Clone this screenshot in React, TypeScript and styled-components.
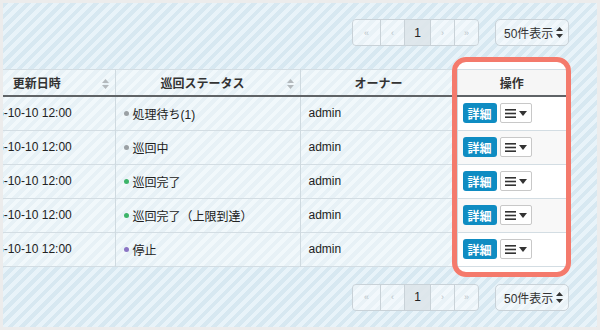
import React from "react";
import styled, { createGlobalStyle } from "styled-components";

const GlobalStyle = createGlobalStyle`
  html, body {
    margin: 0;
    padding: 0;
    height: 330px;
    background: #ececec;
  }
  body {
    font-family: "Liberation Sans", "Noto Sans CJK JP", sans-serif;
    font-size: 12px;
    color: #333333;
  }
`;

const Frame = styled.div`
  position: relative;
  width: 594px;
  height: 324px;
  margin: 3px;
  overflow: hidden;
  background: repeating-linear-gradient(
    135deg,
    #d7e8f1 0px,
    #d7e8f1 4px,
    #e8f3f9 4px,
    #e8f3f9 8px
  );
`;

const Toolbar = styled.div<{ $top?: boolean }>`
  display: flex;
  justify-content: flex-end;
  align-items: center;
  gap: 16px;
  height: 27px;
  padding-right: 28px;
  margin-top: ${(p) => (p.$top ? "16px" : "17px")};
`;

const Pager = styled.ul`
  display: flex;
  margin: 0;
  padding: 0;
  list-style: none;
  border: 1px solid #c9d2d8;
  border-radius: 4px;
  overflow: hidden;
`;

const PageItem = styled.li<{ $active?: boolean; $w: number }>`
  display: flex;
  align-items: center;
  justify-content: center;
  box-sizing: border-box;
  width: ${(p) => p.$w}px;
  height: 25px;
  border-left: 1px solid #c9d2d8;
  background: ${(p) =>
    p.$active ? "rgba(222, 230, 234, 0.9)" : "rgba(255, 255, 255, 0.45)"};
  color: ${(p) => (p.$active ? "#222" : "#b8c2c8")};
  font-size: ${(p) => (p.$active ? "12px" : "9px")};

  &:first-child {
    border-left: none;
  }
`;

const PerPage = styled.div`
  display: flex;
  align-items: center;
  justify-content: space-between;
  box-sizing: border-box;
  width: 74px;
  height: 27px;
  padding: 0 5px 0 8px;
  border: 1px solid #c9d2d8;
  border-radius: 5px;
  background: rgba(255, 255, 255, 0.45);
  color: #333;
  font-size: 12px;
`;

const Grid = styled.table`
  position: relative;
  z-index: 1;
  table-layout: fixed;
  width: 597px;
  margin: 23px 0 0 -34px;
  border-collapse: collapse;
  border-top: 1px solid #d3dde3;
  border-bottom: 1px solid #d3dde3;
`;

const Head = styled.th<{ $op?: boolean; $sort?: boolean }>`
  position: relative;
  height: 25px;
  padding: 0 ${(p) => (p.$sort ? "18px" : "8px")} 0 8px;
  text-align: center;
  font-weight: bold;
  font-size: 12px;
  color: #333;
  background: ${(p) => (p.$op ? "#f6f6f6" : "rgba(255, 255, 255, 0.4)")};
  border-left: 1px solid #cfdae0;
  border-bottom: 2px solid #5f6366;

  &:first-child {
    border-left: none;
  }
`;

const SortMark = styled.svg`
  position: absolute;
  right: 6px;
  top: 9px;
`;

const Row = styled.tr`
  height: 34px;
  border-bottom: 1px solid #d3dde3;
`;

const Cell = styled.td<{ $op?: boolean; $even?: boolean }>`
  padding: 0 ${(p) => (p.$op ? "5px" : "8px")};
  vertical-align: middle;
  font-size: 12px;
  color: #222;
  white-space: nowrap;
  overflow: hidden;
  border-left: 1px solid #cfdae0;
  background: ${(p) =>
    p.$op ? (p.$even ? "#f8f8f8" : "#ffffff") : "rgba(255, 255, 255, 0.4)"};

  &:first-child {
    border-left: none;
  }
`;

const Status = styled.span`
  display: inline-flex;
  align-items: center;
  gap: 4px;
`;

const Dot = styled.i<{ $color: string }>`
  display: inline-block;
  width: 5px;
  height: 5px;
  border-radius: 50%;
  background: ${(p) => p.$color};
`;

const Actions = styled.div`
  display: flex;
  align-items: center;
  gap: 3px;
`;

const DetailButton = styled.button`
  width: 34px;
  height: 20px;
  padding: 0;
  border: none;
  border-radius: 3px;
  background: #0f8cc2;
  color: #ffffff;
  font-family: inherit;
  font-size: 12px;
  font-weight: bold;
`;

const MenuButton = styled.button`
  display: flex;
  align-items: center;
  justify-content: center;
  gap: 3px;
  width: 32px;
  height: 20px;
  padding: 0;
  border: 1px solid #c8c8c8;
  border-radius: 2px;
  background: #ffffff;
`;

const Spotlight = styled.div`
  position: absolute;
  z-index: 0;
  left: 449px;
  top: 54px;
  width: 119px;
  height: 220px;
  border-radius: 14px;
  background: #ffffff;
`;

const Callout = styled.div`
  position: absolute;
  z-index: 2;
  left: 449px;
  top: 54px;
  width: 119px;
  height: 220px;
  box-sizing: border-box;
  border: 5px solid #f47a6c;
  border-radius: 14px;
  pointer-events: none;
`;

const SortIcon = () => (
  <SortMark width="7" height="10" viewBox="0 0 7 10">
    <path d="M3.5 0 L7 4 L0 4 Z" fill="#b3b9bd" />
    <path d="M3.5 10 L7 6 L0 6 Z" fill="#b3b9bd" />
  </SortMark>
);

const SelectArrows = () => (
  <svg width="7" height="11" viewBox="0 0 7 11">
    <path d="M3.5 0 L7 4 L0 4 Z" fill="#333" />
    <path d="M3.5 11 L7 7 L0 7 Z" fill="#333" />
  </svg>
);

const MenuIcon = () => (
  <>
    <svg width="11" height="9" viewBox="0 0 11 9">
      <rect x="0" y="0" width="11" height="1.6" fill="#333" />
      <rect x="0" y="3.7" width="11" height="1.6" fill="#333" />
      <rect x="0" y="7.4" width="11" height="1.6" fill="#333" />
    </svg>
    <svg width="8" height="5" viewBox="0 0 8 5">
      <path d="M0 0 L8 0 L4 5 Z" fill="#333" />
    </svg>
  </>
);

// pager + "per page" select, used above and below the table
const Pagination = ({ top }: { top?: boolean }) => (
  <Toolbar $top={top}>
    <Pager>
      <PageItem $w={27}>«</PageItem>
      <PageItem $w={24}>‹</PageItem>
      <PageItem $w={26} $active>
        1
      </PageItem>
      <PageItem $w={24}>›</PageItem>
      <PageItem $w={24}>»</PageItem>
    </Pager>
    <PerPage>
      50件表示
      <SelectArrows />
    </PerPage>
  </Toolbar>
);

const rows = [
  { status: "処理待ち(1)", color: "#9aa0a4" },
  { status: "巡回中", color: "#9aa0a4" },
  { status: "巡回完了", color: "#3cb469" },
  { status: "巡回完了（上限到達）", color: "#3cb469" },
  { status: "停止", color: "#8a74c4" },
];

const App = () => {
  return (
    <>
      <GlobalStyle />
      <Frame>
        <Pagination top />

        <Spotlight />
        <Grid>
          <colgroup>
            <col style={{ width: 146 }} />
            <col style={{ width: 185 }} />
            <col style={{ width: 157 }} />
            <col style={{ width: 109 }} />
          </colgroup>
          <thead>
            <tr>
              <Head $sort>
                更新日時
                <SortIcon />
              </Head>
              <Head $sort>
                巡回ステータス
                <SortIcon />
              </Head>
              <Head>オーナー</Head>
              <Head $op>操作</Head>
            </tr>
          </thead>
          <tbody>
            {rows.map((r, i) => (
              <Row key={i}>
                <Cell>2016-10-10 12:00</Cell>
                <Cell>
                  <Status>
                    <Dot $color={r.color} />
                    {r.status}
                  </Status>
                </Cell>
                <Cell>admin</Cell>
                <Cell $op $even={i % 2 === 1}>
                  <Actions>
                    <DetailButton>詳細</DetailButton>
                    <MenuButton>
                      <MenuIcon />
                    </MenuButton>
                  </Actions>
                </Cell>
              </Row>
            ))}
          </tbody>
        </Grid>
        <Callout />

        <Pagination />
      </Frame>
    </>
  );
};

export default App;
